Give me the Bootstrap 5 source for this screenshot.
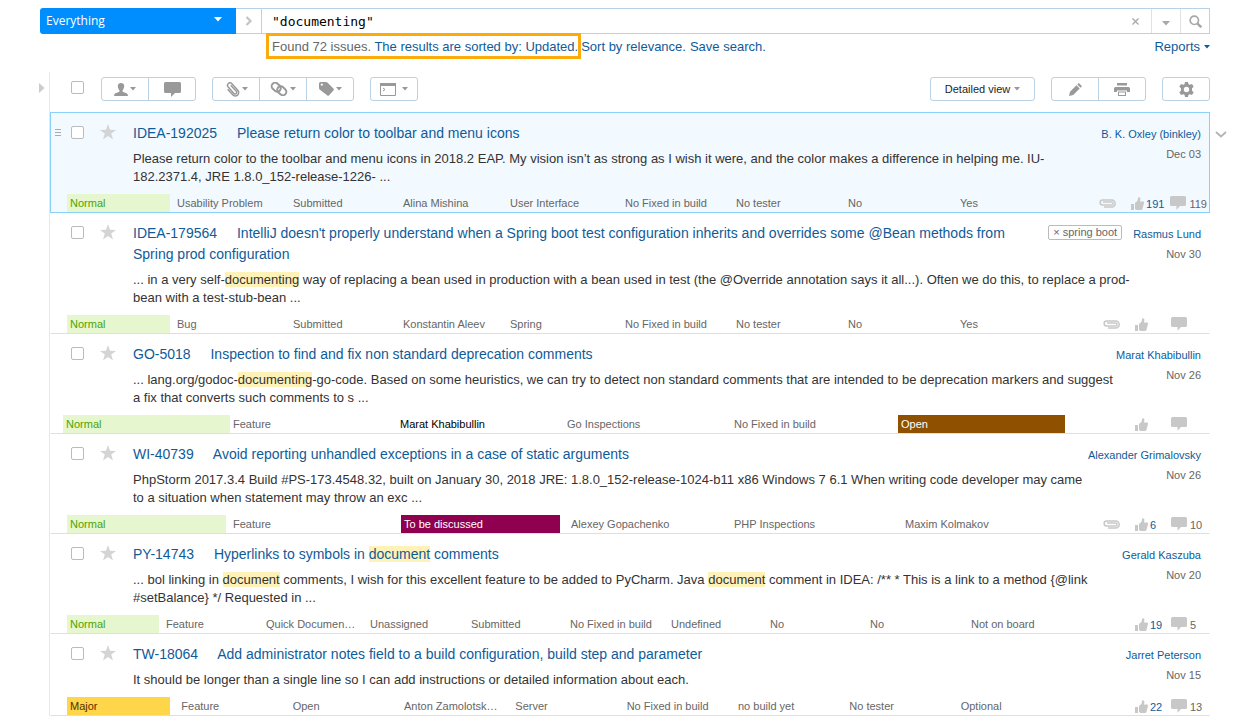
<!DOCTYPE html>
<html lang="en">
<head>
<meta charset="utf-8">
<meta name="viewport" content="width=device-width, initial-scale=1">
<title>Issues</title>
<link href="https://cdn.jsdelivr.net/npm/bootstrap@5.3.0/dist/css/bootstrap.min.css" rel="stylesheet">
<style>
  :root { --link: #0f5b99; --line: #b8d1e5; --muted: #666; --icon: #999; --pale: #c8c8c8; }
  body { font-family: "Liberation Sans", Arial, sans-serif; font-size: 13px; line-height: 18px; color: #333; background: #fff; }
  a { color: var(--link); text-decoration: none; }
  a:hover { text-decoration: underline; }
  svg { display: block; fill: currentColor; flex: none; }
  .page { padding: 8px 38px 0 40px; }

  /* search bar */
  .search { height: 26px; }
  .scope { width: 196px; background: #008eff; color: #fff; border: 0; border-radius: 3px 0 0 3px; font: 12px/26px "Open Sans", sans-serif; padding: 0 14px 0 6px; }
  .scope svg { margin-top: 9px; }
  .query { border: 1px solid var(--line); }
  .crumb { width: 26px; color: #c4c4c4; border-right: 1px solid var(--line); }
  .query input { border: 0; outline: 0; background: none; color: #000; font: 13px/24px "DejaVu Sans Mono", monospace; padding: 1px 10px 0; min-width: 0; }
  .tool { border: 0; background: none; padding: 0; width: 29px; color: #a8a8a8; }
  .tool + .tool { border-left: 1px solid #e2e2e2; }
  .clear { width: 32px; }

  .summary { margin-top: -1px; line-height: 20px; color: var(--muted); padding-left: 226px; }
  .found { border: 3px solid #fbab0a; padding: 1px 0 0 3px; height: 26px; position: relative; }

  /* issue list */
  .issues { margin: 13px 0 0 9px; border-left: 1px solid #e8e8e8; position: relative; }
  .expand { position: absolute; left: -11px; top: 11px; color: #ccc; border: 0; background: none; padding: 0; }
  .toolbar { padding: 5px 0 11px 21px; }
  .box { appearance: none; width: 13px; height: 13px; border: 1px solid #bbb; border-radius: 2px; background: #fff; margin: 0; flex: none; }
  .box:checked { background: #008eff; }
  .toolbar .box { margin: 4px 17px 0 0; }
  .toolbar .btn { width: 48px; height: 24px; padding: 0; border: 1px solid var(--line); border-radius: 3px; color: var(--icon); background: #fff; display: inline-flex; align-items: center; justify-content: center; gap: 2px; font-size: 11px; flex: none; }
  .toolbar .btn.view { width: 105px; gap: 4px; }

  .issue { border: 1px solid transparent; border-width: 0 1px 1px; border-bottom-color: #dfdfdf; position: relative; }
  .issue.current { border-width: 1px; border-color: #89d1f8; background: #f2f9ff; }
  .head { padding: 10px 8px 0 20px; }
  .head .box { margin: 3px 16px 0 0; }
  .grip { position: absolute; left: 4px; top: 16px; color: #aaa; }
  .star { border: 0; background: none; padding: 0; color: #d4d4d4; width: 16px; height: 18px; margin-right: 17px; flex: none; }
  .title { font-size: 14px; line-height: 21px; font-weight: 400; margin: 0 0 6px; }
  .title a:first-child { margin-right: 16px; }
  mark.hit { padding: 0; background: #fff2b8; color: inherit; }
  .text { margin: 0 0 8px; }
  .tag { border: 1px solid #bbb; border-radius: 2px; background: #fff; color: var(--muted); font-size: 11px; line-height: 13px; padding: 0 4px; margin: 2px 10px 0; }
  .by { font-size: 11px; line-height: 20px; text-align: right; margin-left: 1px; padding-top: 1px; color: var(--muted); flex: none; white-space: nowrap; }

  .foot { font-size: 11px; color: var(--muted); padding-left: 16px; }
  .fields { display: grid; margin: 0; padding: 0; list-style: none; flex: 1 1 0; min-width: 0; }
  .fields li { padding: 0 3px; white-space: nowrap; overflow: hidden; text-overflow: ellipsis; }
  .idea { grid-template-columns: 107fr 116fr 110fr 107fr 115fr 111fr 112fr 112fr 112fr; }
  .go { grid-template-columns: repeat(6, 1fr); margin: 0 4px 0 -4px; }
  .wi { grid-template-columns: 163fr 171fr 167fr 163fr 171fr 167fr; }
  .py { grid-template-columns: 96fr 100fr 104fr 101fr 99fr 101fr 99fr 100fr 101fr 101fr; }
  .tw { grid-template-columns: repeat(9, 1fr); }
  .normal { background: #e6f6cf; color: #4da400; }
  .major { background: #ffd54a; color: #553000; }
  .discuss { background: #8f0050; color: #fff; }
  .opened { background: #8f5000; color: #fff; }
  .meta { width: 140px; color: var(--pale); }
  .clip { margin-right: 15px; }
  .votes { min-width: 36px; padding-right: 6px; gap: 2px; color: inherit; }
  .votes span { color: var(--link); }
  .notes { min-width: 38px; padding-right: 2px; gap: 3px; color: inherit; }
  .notes span { color: var(--muted); }
  .meta span { line-height: 18px; padding-top: 1px; height: 18px; }
  .next { position: absolute; right: -18px; top: 18px; border: 0; background: none; padding: 0; color: #b4b4b4; }
</style>
<script src="https://cdn.jsdelivr.net/npm/bootstrap@5.3.0/dist/js/bootstrap.bundle.min.js"></script>
</head>
<body>
<svg class="d-none" aria-hidden="true">
  <symbol id="caret" viewBox="0 0 6 4"><path d="M0 0h6L3 3.5z"/></symbol>
  <symbol id="star" viewBox="0 0 16 16"><path d="M8 0l2 5.800 6 .1-4.800 3.700 1.800 6L8 12.100 3 15.600l1.800-6L0 5.900l6-.1z"/></symbol>
  <symbol id="clip" viewBox="0 0 18 9"><path d="M5 2.800h8.500a1.500 1.500 0 0 1 0 3.200H4.700a2.500 2.500 0 0 1 0-5.100h9a3.500 3.500 0 0 1 0 7H6" transform="translate(0 .1)" fill="none" stroke="currentColor" stroke-width="1.500"/></symbol>
  <symbol id="thumb" viewBox="0 0 13 13"><path d="M0 7h3v6H0zM4 6L6.500 3.800 7.200.5C8.500-.3 9.500.8 9.400 2L9 4.500h3.200c.8 0 1 .8.8 1.400l-1.500 5.900c-.3.900-.8 1.200-1.600 1.200H5.500L4 12z"/></symbol>
  <symbol id="note" viewBox="0 0 16 14"><path d="M1.500 0h13q1.500 0 1.500 1.500v7q0 1.500-1.500 1.500H10l-3.500 3.800V10h-5Q0 10 0 8.500v-7Q0 0 1.500 0z"/></symbol>
</svg>

<div class="page">
  <form class="search d-flex" role="search">
    <button type="button" class="scope d-flex justify-content-between"><span>Everything</span><svg width="8" height="5" viewBox="0 0 8 5"><path d="M0 0h8L4 4.500z"/></svg></button>
    <div class="query d-flex flex-fill border-start-0">
      <div class="crumb d-flex align-items-center justify-content-center"><svg width="8" height="10" viewBox="0 0 8 10"><path d="M1.500 1l4 4-4 4" fill="none" stroke="currentColor" stroke-width="2.200"/></svg></div>
      <input class="flex-fill" type="text" aria-label="Search query" value='"documenting"'>
      <button type="button" class="tool clear d-flex align-items-center justify-content-center" aria-label="Clear"><svg width="7" height="7" viewBox="0 0 7 7"><path d="M.5.5l6 6M6.500.5l-6 6" fill="none" stroke="currentColor" stroke-width="1.300"/></svg></button>
      <button type="button" class="tool d-flex align-items-center justify-content-center" aria-label="History"><svg class="mt-1" width="8" height="5" viewBox="0 0 8 5"><path d="M0 0h8L4 4.500z"/></svg></button>
      <button type="submit" class="tool d-flex align-items-center justify-content-center" aria-label="Search"><svg width="13" height="13" viewBox="0 0 13 13"><path d="M8.300 8.300l4 4" stroke="currentColor" stroke-width="2.400"/><circle cx="5.300" cy="5.300" r="4.200" fill="none" stroke="currentColor" stroke-width="1.700"/></svg></button>
    </div>
  </form>

  <div class="summary d-flex">
    <div class="found text-nowrap">Found 72 issues. <a href="#">The results are sorted by: Updated.</a></div>
    <div class="d-flex flex-fill gap-1 text-nowrap pt-1"><a href="#">Sort by relevance.</a><a href="#">Save search.</a>
      <a class="ms-auto d-flex gap-1" href="#">Reports <svg class="mt-2" width="6" height="4"><use href="#caret"/></svg></a></div>
  </div>

  <main class="issues">
    <button type="button" class="expand" aria-label="Show sidebar"><svg width="6" height="10" viewBox="0 0 6 10"><path d="M0 0l5.500 5L0 10z"/></svg></button>
    <div class="toolbar d-flex gap-3">
      <div class="d-flex"><input class="box" type="checkbox" aria-label="Select all">
        <div class="btn-group">
          <button type="button" class="btn" aria-label="Assignee"><svg width="14" height="13" viewBox="0 0 14 13"><path d="M7 0c2.300 0 3.400 1.500 3.200 3.600C10 5.500 9.200 6.700 8.600 7.300v1.400c1.600.6 4 1.200 4.900 2.300l.5 2H0l.5-2c.9-1.100 3.300-1.700 4.900-2.300V7.300C4.800 6.700 4 5.500 3.800 3.600 3.600 1.500 4.700 0 7 0z"/></svg><svg width="6" height="4"><use href="#caret"/></svg></button>
          <button type="button" class="btn" aria-label="Comment"><svg width="17" height="15" viewBox="0 0 17 15"><path d="M1.500 0h14q1.500 0 1.500 1.500v8q0 1.500-1.500 1.500H11l-4 4v-4H1.500Q0 11 0 9.500v-8Q0 0 1.500 0z"/></svg></button>
        </div></div>
      <div class="btn-group">
        <button type="button" class="btn" aria-label="Attach"><svg width="15" height="15" viewBox="0 0 15 15"><path d="M5 2.800h8.500a1.500 1.500 0 0 1 0 3.200H4.700a2.500 2.500 0 0 1 0-5.100h9a3.500 3.500 0 0 1 0 7H6" transform="translate(7.500 7.500) rotate(48) scale(.98) translate(-9.500 -4.400)" fill="none" stroke="currentColor" stroke-width="1.500"/></svg><svg width="6" height="4"><use href="#caret"/></svg></button>
        <button type="button" class="btn" aria-label="Link"><svg width="18" height="14" viewBox="0 0 18 14"><g fill="none" stroke="currentColor" stroke-width="2"><rect x="-4.900" y="-3.500" width="9.800" height="7" rx="3.500" transform="translate(6.200 5.200) rotate(42)"/><rect x="-4.900" y="-3.500" width="9.800" height="7" rx="3.500" transform="translate(11.800 8.800) rotate(42)"/></g></svg><svg width="6" height="4"><use href="#caret"/></svg></button>
        <button type="button" class="btn" aria-label="Tag"><svg width="15" height="14" viewBox="0 0 15 14"><path fill-rule="evenodd" d="M1.500 0H7q.8 0 1.400.6l6 6q1 1 0 2l-4.300 4.700q-1 1-2 0L.6 7.400Q0 6.800 0 6V1.500Q0 0 1.500 0zM2.800 1.600a1.100 1.100 0 1 0 0 2.200 1.100 1.100 0 0 0 0-2.200z"/></svg><svg width="6" height="4"><use href="#caret"/></svg></button>
      </div>
      <button type="button" class="btn" aria-label="Command"><svg class="me-1" width="16" height="13" viewBox="0 0 16 13"><path d="M.5 1h15v11.500H.5z" fill="none" stroke="currentColor"/><path d="M0 0h16v3H0z"/><path d="M3 5l2 1.500L3 8" fill="none" stroke="currentColor"/></svg><svg width="6" height="4"><use href="#caret"/></svg></button>
      <button type="button" class="btn view ms-auto"><span class="text-body">Detailed view</span><svg width="6" height="4"><use href="#caret"/></svg></button>
      <div class="btn-group">
        <button type="button" class="btn" aria-label="Edit"><svg width="13" height="13" viewBox="0 0 13 13"><path d="M0 13l1-4.200L7.500 2.300l3.200 3.200L4.200 12zM8.300 1.500L9.800 0 13 3.200l-1.500 1.500z"/></svg></button>
        <button type="button" class="btn" aria-label="Print"><svg width="16" height="13" viewBox="0 0 16 13"><path fill-rule="evenodd" d="M3 0h10v2.500H3zM1.500 4h13Q16 4 16 5.500V9h-3V7.500H3V9H0V5.500Q0 4 1.500 4zM4 8.500h8V13H4zM5 9.500V12h6V9.500z"/></svg></button>
      </div>
      <button type="button" class="btn" aria-label="Settings"><svg width="15" height="15" viewBox="0 0 15 15"><path fill-rule="evenodd" d="M6 0h3l.5 2.200 1.200.6L13 2l1.700 2.700L13 6.300v2.400l1.700 1.600L13 13l-2.300-.8-1.200.6L9 15H6l-.5-2.200-1.200-.6L2 13 .3 10.300 2 8.700V6.300L.3 4.700 2 2l2.300.8 1.200-.6zM7.500 4.800a2.700 2.700 0 1 0 0 5.400 2.700 2.700 0 0 0 0-5.400z"/></svg></button>
    </div>

    <article class="issue current">
      <svg class="grip" width="6" height="8" viewBox="0 0 6 8"><path d="M0 0h6v1H0zM0 3h6v1H0zM0 6h6v1H0z"/></svg>
      <button type="button" class="next" aria-label="Open preview"><svg width="12" height="7" viewBox="0 0 12 7"><path d="M1 1l5 4.500L11 1" fill="none" stroke="currentColor" stroke-width="1.800"/></svg></button>
      <div class="head d-flex">
        <input class="box" type="checkbox" aria-label="Select IDEA-192025">
        <button type="button" class="star" aria-label="Star"><svg width="16" height="16"><use href="#star"/></svg></button>
        <div class="flex-fill">
          <h2 class="title"><a href="#">IDEA-192025</a> <a href="#">Please return color to toolbar and menu icons</a></h2>
          <p class="text">Please return color to the toolbar and menu icons in 2018.2 EAP. My vision isn’t as strong as I wish it were, and the color makes a difference in helping me. IU-182.2371.4, JRE 1.8.0_152-release-1226- ...</p>
        </div>
        <div class="by"><a href="#">B. K. Oxley (binkley)</a><br>Dec 03</div>
      </div>
      <div class="foot d-flex">
        <ul class="fields idea"><li class="normal me-1">Normal</li><li>Usability Problem</li><li>Submitted</li><li>Alina Mishina</li><li>User Interface</li><li>No Fixed in build</li><li>No tester</li><li>No</li><li>Yes</li></ul>
        <div class="meta d-flex align-items-center justify-content-end"><svg class="clip" width="18" height="9"><use href="#clip"/></svg><a class="votes d-flex align-items-center" href="#" aria-label="Votes"><svg width="13" height="13"><use href="#thumb"/></svg><span>191</span></a><a class="notes d-flex align-items-center" href="#" aria-label="Comments"><svg width="16" height="14"><use href="#note"/></svg><span>119</span></a></div>
      </div>
    </article>

    <article class="issue">
      <div class="head d-flex">
        <input class="box" type="checkbox" aria-label="Select IDEA-179564">
        <button type="button" class="star" aria-label="Star"><svg width="16" height="16"><use href="#star"/></svg></button>
        <div class="flex-fill">
          <button type="button" class="tag float-end">× spring boot</button>
          <h2 class="title"><a href="#">IDEA-179564</a> <a href="#">IntelliJ doesn't properly understand when a Spring boot test configuration inherits and overrides some @Bean methods from Spring prod configuration</a></h2>
          <p class="text">... in a very self-<mark class="hit">documenting</mark> way of replacing a bean used in production with a bean used in test (the @Override annotation says it all...). Often we do this, to replace a prod-bean with a test-stub-bean ...</p>
        </div>
        <div class="by"><a href="#">Rasmus Lund</a><br>Nov 30</div>
      </div>
      <div class="foot d-flex">
        <ul class="fields idea"><li class="normal me-1">Normal</li><li>Bug</li><li>Submitted</li><li>Konstantin Aleev</li><li>Spring</li><li>No Fixed in build</li><li>No tester</li><li>No</li><li>Yes</li></ul>
        <div class="meta d-flex align-items-center justify-content-end"><svg class="clip" width="18" height="9"><use href="#clip"/></svg><a class="votes d-flex align-items-center" href="#" aria-label="Votes"><svg width="13" height="13"><use href="#thumb"/></svg></a><a class="notes d-flex align-items-center" href="#" aria-label="Comments"><svg width="16" height="14"><use href="#note"/></svg></a></div>
      </div>
    </article>

    <article class="issue">
      <div class="head d-flex">
        <input class="box" type="checkbox" aria-label="Select GO-5018">
        <button type="button" class="star" aria-label="Star"><svg width="16" height="16"><use href="#star"/></svg></button>
        <div class="flex-fill">
          <h2 class="title"><a href="#">GO-5018</a> <a href="#">Inspection to find and fix non standard deprecation comments</a></h2>
          <p class="text">... lang.org/godoc-<mark class="hit">documenting</mark>-go-code. Based on some heuristics, we can try to detect non standard comments that are intended to be deprecation markers and suggest a fix that converts such comments to s ...</p>
        </div>
        <div class="by"><a href="#">Marat Khabibullin</a><br>Nov 26</div>
      </div>
      <div class="foot d-flex">
        <ul class="fields go"><li class="normal">Normal</li><li>Feature</li><li class="text-black">Marat Khabibullin</li><li>Go Inspections</li><li>No Fixed in build</li><li class="opened">Open</li></ul>
        <div class="meta d-flex align-items-center justify-content-end"><a class="votes d-flex align-items-center" href="#" aria-label="Votes"><svg width="13" height="13"><use href="#thumb"/></svg></a><a class="notes d-flex align-items-center" href="#" aria-label="Comments"><svg width="16" height="14"><use href="#note"/></svg></a></div>
      </div>
    </article>

    <article class="issue">
      <div class="head d-flex">
        <input class="box" type="checkbox" aria-label="Select WI-40739">
        <button type="button" class="star" aria-label="Star"><svg width="16" height="16"><use href="#star"/></svg></button>
        <div class="flex-fill">
          <h2 class="title"><a href="#">WI-40739</a> <a href="#">Avoid reporting unhandled exceptions in a case of static arguments</a></h2>
          <p class="text">PhpStorm 2017.3.4 Build #PS-173.4548.32, built on January 30, 2018 JRE: 1.8.0_152-release-1024-b11 x86 Windows 7 6.1 When writing code developer may came to a situation when statement may throw an exc ...</p>
        </div>
        <div class="by"><a href="#">Alexander Grimalovsky</a><br>Nov 26</div>
      </div>
      <div class="foot d-flex">
        <ul class="fields wi"><li class="normal me-1">Normal</li><li>Feature</li><li class="discuss me-2">To be discussed</li><li>Alexey Gopachenko</li><li>PHP Inspections</li><li>Maxim Kolmakov</li></ul>
        <div class="meta d-flex align-items-center justify-content-end"><svg class="clip" width="18" height="9"><use href="#clip"/></svg><a class="votes d-flex align-items-center" href="#" aria-label="Votes"><svg width="13" height="13"><use href="#thumb"/></svg><span>6</span></a><a class="notes d-flex align-items-center" href="#" aria-label="Comments"><svg width="16" height="14"><use href="#note"/></svg><span>10</span></a></div>
      </div>
    </article>

    <article class="issue">
      <div class="head d-flex">
        <input class="box" type="checkbox" aria-label="Select PY-14743">
        <button type="button" class="star" aria-label="Star"><svg width="16" height="16"><use href="#star"/></svg></button>
        <div class="flex-fill">
          <h2 class="title"><a href="#">PY-14743</a> <a href="#">Hyperlinks to symbols in <mark class="hit">document</mark> comments</a></h2>
          <p class="text">... bol linking in <mark class="hit">document</mark> comments, I wish for this excellent feature to be added to PyCharm. Java <mark class="hit">document</mark> comment in IDEA: /** * This is a link to a method {@link #setBalance} */ Requested in ...</p>
        </div>
        <div class="by"><a href="#">Gerald Kaszuba</a><br>Nov 20</div>
      </div>
      <div class="foot d-flex">
        <ul class="fields py"><li class="normal me-1">Normal</li><li>Feature</li><li>Quick Documen…</li><li>Unassigned</li><li>Submitted</li><li>No Fixed in build</li><li>Undefined</li><li>No</li><li>No</li><li>Not on board</li></ul>
        <div class="meta d-flex align-items-center justify-content-end"><a class="votes d-flex align-items-center" href="#" aria-label="Votes"><svg width="13" height="13"><use href="#thumb"/></svg><span>19</span></a><a class="notes d-flex align-items-center" href="#" aria-label="Comments"><svg width="16" height="14"><use href="#note"/></svg><span>5</span></a></div>
      </div>
    </article>

    <article class="issue">
      <div class="head d-flex">
        <input class="box" type="checkbox" aria-label="Select TW-18064">
        <button type="button" class="star" aria-label="Star"><svg width="16" height="16"><use href="#star"/></svg></button>
        <div class="flex-fill">
          <h2 class="title"><a href="#">TW-18064</a> <a href="#">Add administrator notes field to a build configuration, build step and parameter</a></h2>
          <p class="text">It should be longer than a single line so I can add instructions or detailed information about each.</p>
        </div>
        <div class="by"><a href="#">Jarret Peterson</a><br>Nov 15</div>
      </div>
      <div class="foot d-flex">
        <ul class="fields tw"><li class="major me-2">Major</li><li>Feature</li><li>Open</li><li>Anton Zamolotsk…</li><li>Server</li><li>No Fixed in build</li><li>no build yet</li><li>No tester</li><li>Optional</li></ul>
        <div class="meta d-flex align-items-center justify-content-end"><a class="votes d-flex align-items-center" href="#" aria-label="Votes"><svg width="13" height="13"><use href="#thumb"/></svg><span>22</span></a><a class="notes d-flex align-items-center" href="#" aria-label="Comments"><svg width="16" height="14"><use href="#note"/></svg><span>13</span></a></div>
      </div>
    </article>
  </main>
</div>
</body>
</html>
